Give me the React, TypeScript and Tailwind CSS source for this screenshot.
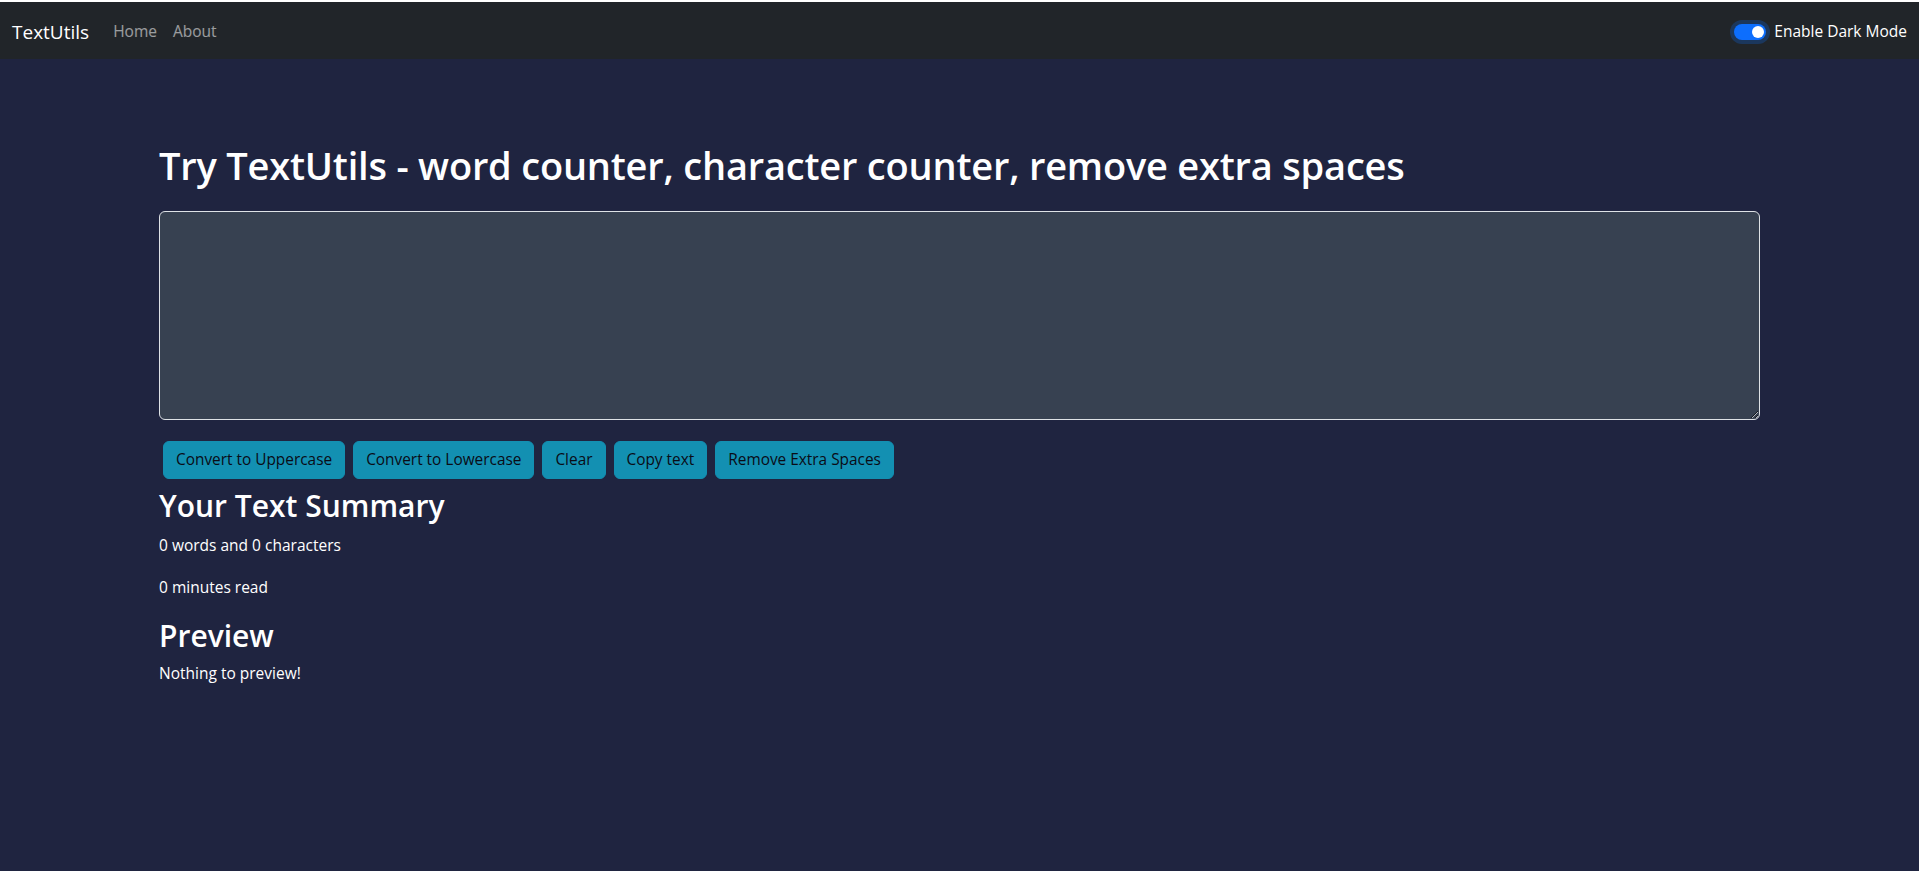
import React, { useState } from 'react';

const font = { fontFamily: '"Open Sans", "Noto Sans", sans-serif' };

const Navbar: React.FC<{ dark: boolean; onToggle: () => void }> = ({ dark, onToggle }) => {
  return (
    <nav className="border-t-2 border-white bg-[#212529] h-[59px] flex items-center px-3 pt-[2px]">
      <a href="#" className="text-white text-[19px] leading-[30px] mr-4 py-[5px]">TextUtils</a>
      <ul className="flex items-center">
        <li><a href="#" className="block px-2 py-2 text-[15.5px] text-white/55">Home</a></li>
        <li><a href="#" className="block px-2 py-2 text-[15.5px] text-white/55">About</a></li>
      </ul>
      <div className="ml-auto flex items-center gap-2 text-white">
        <button
          type="button"
          onClick={onToggle}
          className={`relative w-8 h-4 rounded-full shadow-[0_0_0_4px_rgba(13,110,253,0.25)] ${dark ? 'bg-[#0d6efd]' : 'bg-white border border-gray-400'}`}
        >
          <span
            className={`absolute top-[2px] w-3 h-3 rounded-full ${dark ? 'right-[2px] bg-white' : 'left-[2px] bg-gray-400'}`}
          />
        </button>
        <label className="text-[15.5px]">Enable Dark Mode</label>
      </div>
    </nav>
  );
};

export default function App() {
  const [dark, setDark] = useState(true);
  const [text, setText] = useState('');

  const words = text.split(/\s+/).filter(w => w.length > 0).length;
  const disabled = text.length === 0;

  const btn = 'mx-1 my-1 px-3 py-[6px] rounded-[6px] border border-[#0dcaf0] bg-[#0dcaf0] text-black text-[15.4px] leading-6 disabled:opacity-65';

  return (
    <div style={font} className="min-h-[871px] bg-[#1f2440] text-white">
      <Navbar dark={dark} onToggle={() => setDark(!dark)} />
      <div className="px-[159px] pt-[82px]">
        <h1 className="text-[38px] leading-[48px] tracking-[-0.2px] font-semibold mb-[22px]">
          Try TextUtils - word counter, character counter, remove extra spaces
        </h1>
        <textarea
          rows={8}
          value={text}
          onChange={e => setText(e.target.value)}
          className="block w-full h-[209px] bg-[#374151] text-white border border-[#dee2e6] rounded-[6px] px-3 py-[6px] outline-none"
        />
        <div className="mt-[17px]">
          <button disabled={disabled} onClick={() => setText(text.toUpperCase())} className={btn}>Convert to Uppercase</button>
          <button disabled={disabled} onClick={() => setText(text.toLowerCase())} className={btn}>Convert to Lowercase</button>
          <button disabled={disabled} onClick={() => setText('')} className={btn}>Clear</button>
          <button disabled={disabled} onClick={() => navigator.clipboard?.writeText(text)} className={btn}>Copy text</button>
          <button disabled={disabled} onClick={() => setText(text.split(/[ ]+/).join(' '))} className={btn}>Remove Extra Spaces</button>
        </div>
        <h2 className="text-[30px] leading-[38px] font-semibold mt-1 mb-2">Your Text Summary</h2>
        <p className="text-[15.5px] leading-6 mb-[18px]">{words} words and {text.length} characters</p>
        <p className="text-[15.5px] leading-6 mb-[18px]">{0.008 * words} minutes read</p>
        <h2 className="text-[30px] leading-[38px] font-semibold mb-[6px]">Preview</h2>
        <p className="text-[15.5px] leading-6">{text.length > 0 ? text : 'Nothing to preview!'}</p>
      </div>
    </div>
  );
}
